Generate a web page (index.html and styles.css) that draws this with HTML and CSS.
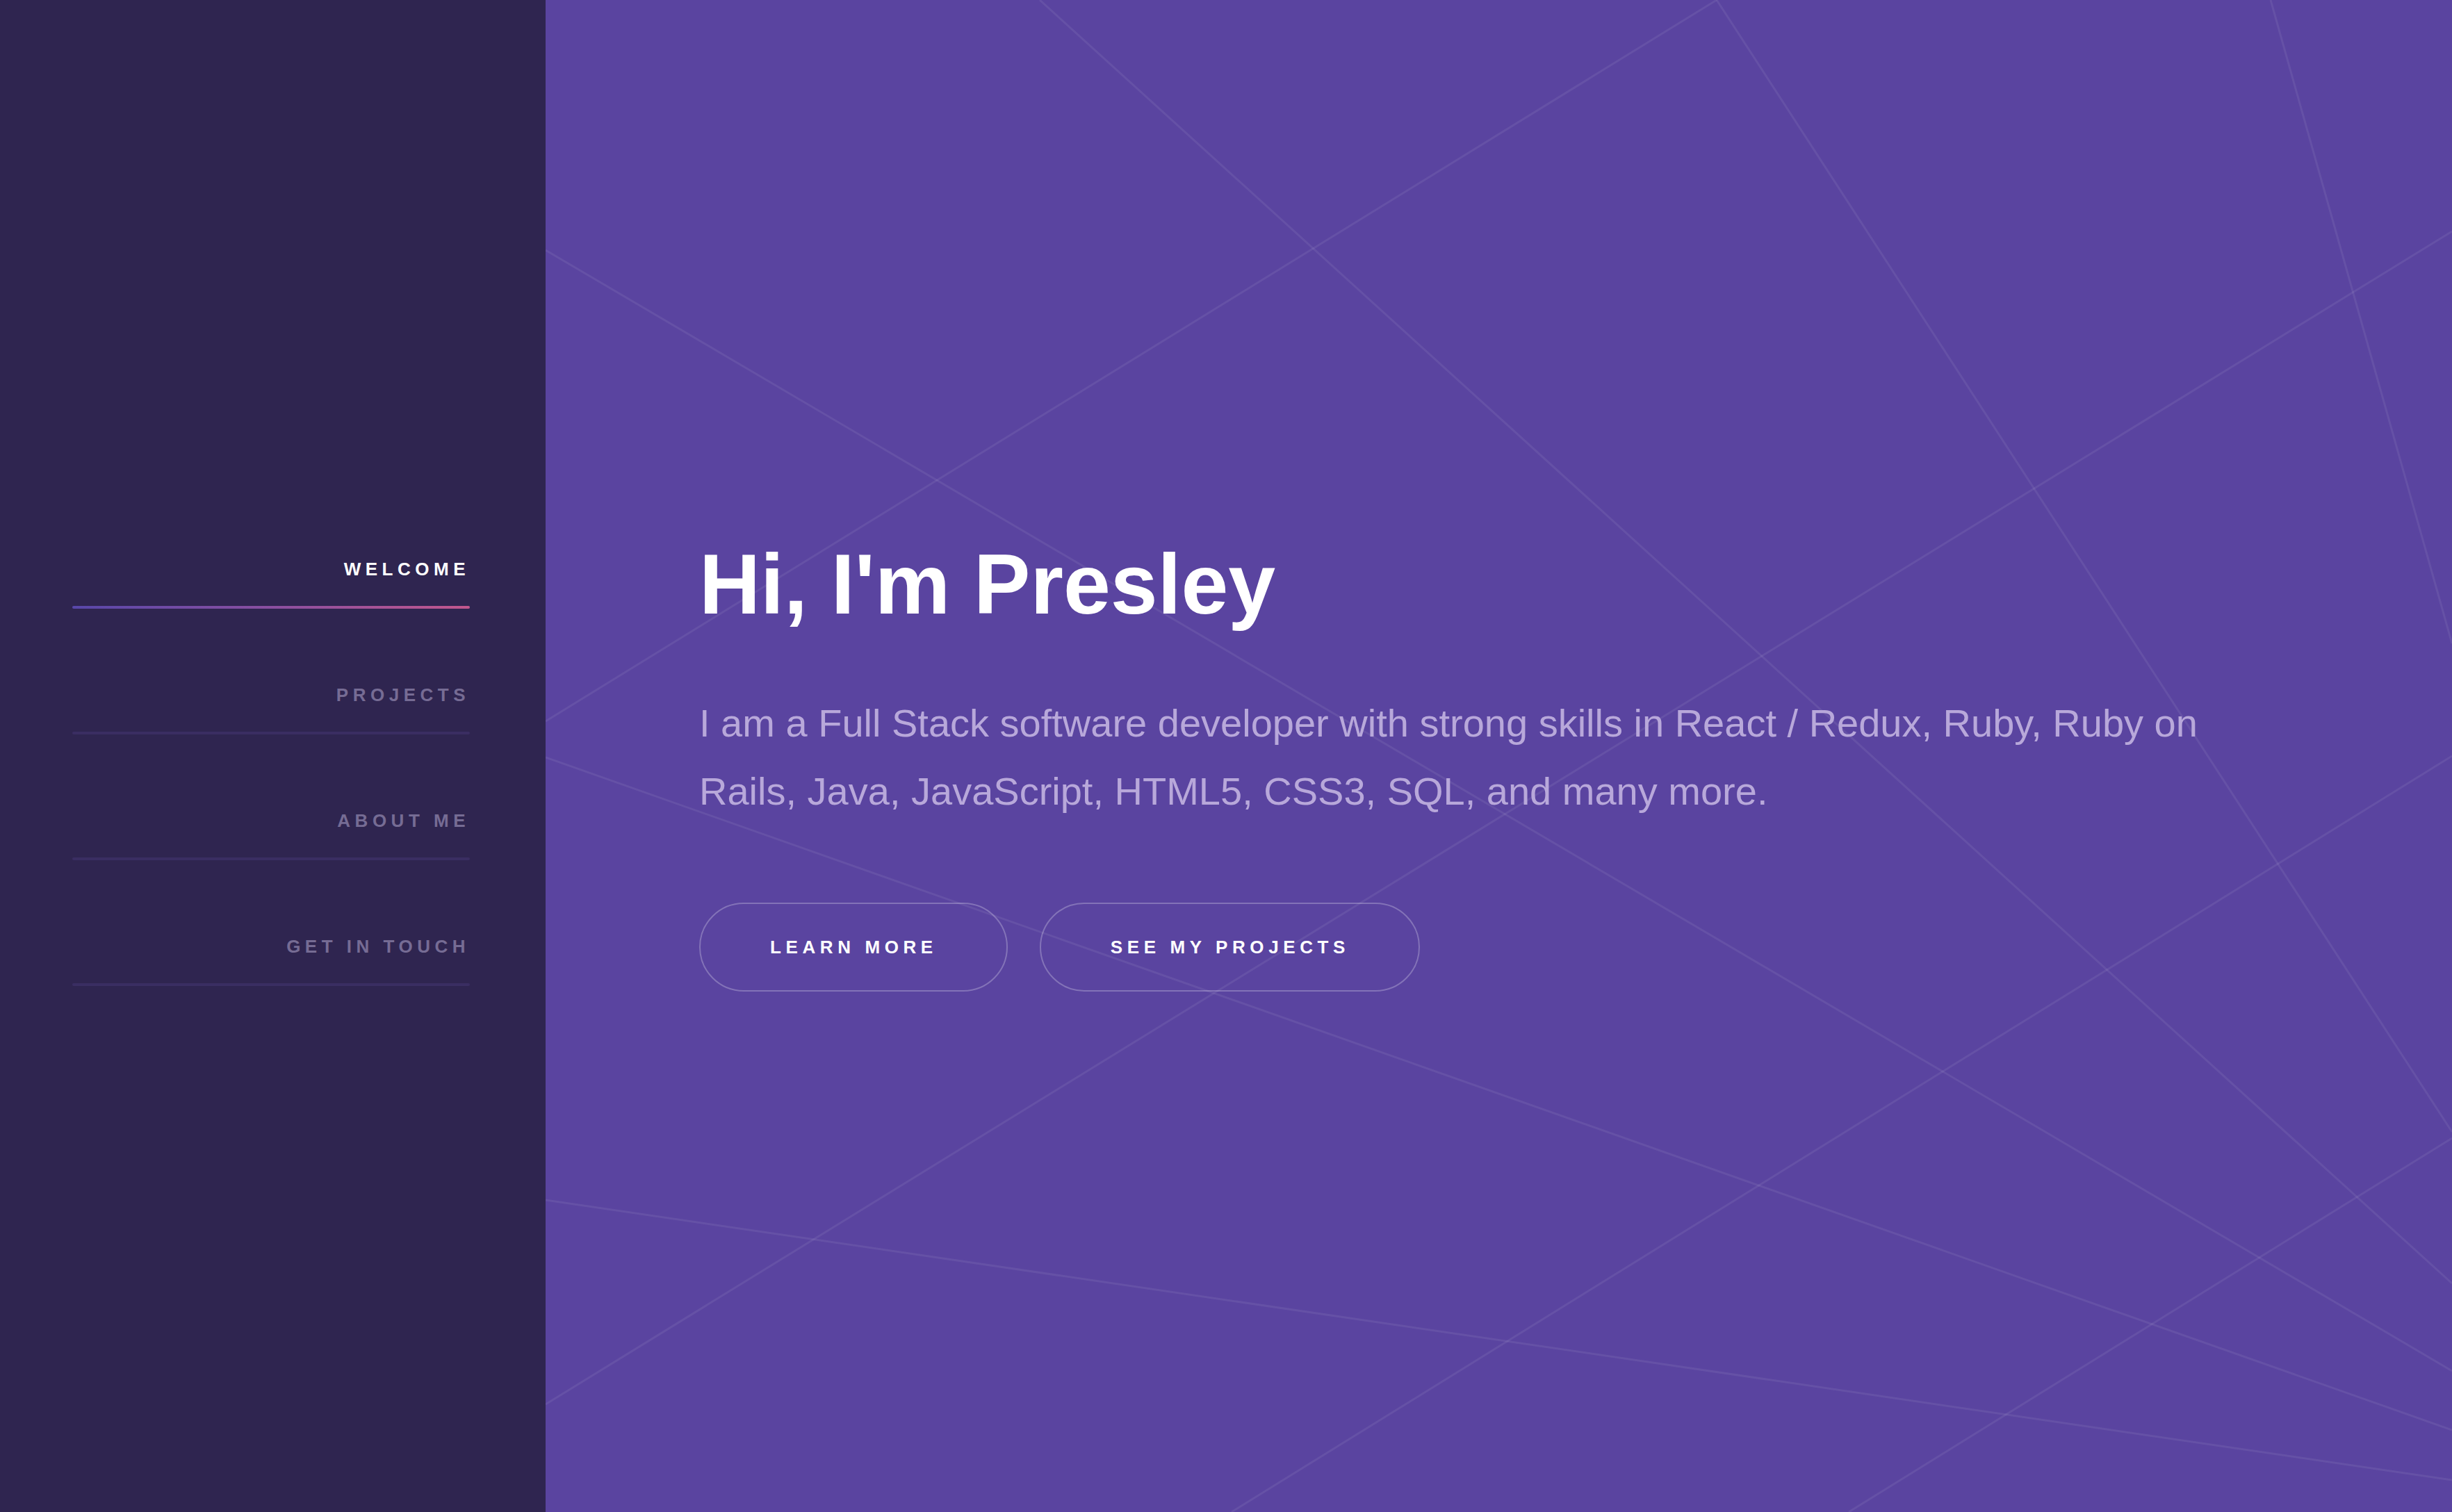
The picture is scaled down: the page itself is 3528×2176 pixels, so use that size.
FILE: index.html
```html
<!DOCTYPE html>
<html lang="en">
<head>
<meta charset="utf-8">
<title>Presley</title>
<link rel="stylesheet" href="styles.css">
</head>
<body>
<div class="page">
  <aside class="sidebar">
    <nav class="nav">
      <a class="nav-item is-active" href="#welcome">Welcome</a>
      <a class="nav-item" href="#projects">Projects</a>
      <a class="nav-item" href="#about">About me</a>
      <a class="nav-item" href="#contact">Get in touch</a>
    </nav>
  </aside>
  <main class="hero">
    <svg class="hero-lines" viewBox="0 0 2743 2176" preserveAspectRatio="none" aria-hidden="true">
      <g stroke="rgba(255,255,255,0.07)" stroke-width="3" fill="none">
        <line x1="711" y1="0" x2="2743" y2="1847"/>
        <line x1="1685" y1="0" x2="0" y2="1038"/>
        <line x1="1685" y1="0" x2="2743" y2="1629"/>
        <line x1="2482" y1="0" x2="2743" y2="926"/>
        <line x1="2743" y1="333" x2="0" y2="2021"/>
        <line x1="0" y1="360" x2="2743" y2="1973"/>
        <line x1="0" y1="1090" x2="2743" y2="2058"/>
        <line x1="0" y1="1727" x2="2743" y2="2130"/>
        <line x1="2743" y1="1088" x2="987" y2="2176"/>
        <line x1="2743" y1="1638" x2="1875" y2="2176"/>
      </g>
    </svg>
    <div class="hero-content">
      <h1 class="hero-title">Hi, I'm Presley</h1>
      <p class="hero-text">I am a Full Stack software developer with strong skills in React / Redux, Ruby, Ruby on Rails, Java, JavaScript, HTML5, CSS3, SQL, and many more.</p>
      <div class="hero-actions">
        <a class="btn" href="#about">Learn more</a>
        <a class="btn" href="#projects">See my projects</a>
      </div>
    </div>
  </main>
</div>
</body>
</html>
```

FILE: styles.css
```css
* {
  box-sizing: border-box;
}

html, body {
  margin: 0;
  padding: 0;
  height: 100%;
}

body {
  font-family: "Liberation Sans", Arial, sans-serif;
  background: #2f2550;
}

.page {
  display: flex;
  height: 100vh;
  overflow: hidden;
}

.sidebar {
  flex: 0 0 785px;
  background: #2f2550;
  padding: 803px 109px 0 104px;
}

.nav {
  display: flex;
  flex-direction: column;
  gap: 108px;
}

.nav-item {
  display: block;
  text-align: right;
  text-decoration: none;
  text-transform: uppercase;
  font-weight: 700;
  font-size: 26px;
  line-height: 32px;
  letter-spacing: 6.5px;
  color: #766c94;
}

.nav-item::after {
  content: "";
  display: block;
  height: 4px;
  margin-top: 37px;
  border-radius: 2px;
  background: #3a2e62;
}

.nav-item.is-active {
  color: #ffffff;
}

.nav-item.is-active::after {
  background: linear-gradient(90deg, #5847a9 0%, #8a4fa0 50%, #c2578d 100%);
}

.hero {
  flex: 1 1 auto;
  position: relative;
  background: #5a44a0;
  padding: 768px 0 0 221px;
}

.hero-lines {
  position: absolute;
  top: 0;
  left: 0;
  width: 100%;
  height: 100%;
  z-index: 0;
}

.hero-content {
  position: relative;
  z-index: 1;
}

.hero-title {
  margin: 0;
  font-size: 122px;
  line-height: 1.2;
  font-weight: 700;
  color: #ffffff;
}

.hero-text {
  margin: 78px 0 0;
  max-width: 2240px;
  font-size: 56px;
  line-height: 98px;
  color: #b8a8da;
}

.hero-actions {
  display: flex;
  gap: 46px;
  margin-top: 111px;
}

.btn {
  display: inline-block;
  padding: 47px 99px 47px 100px;
  border: 2px solid rgba(255, 255, 255, 0.25);
  border-radius: 64px;
  text-decoration: none;
  text-transform: uppercase;
  font-weight: 700;
  font-size: 26px;
  line-height: 30px;
  letter-spacing: 6.6px;
  color: #ffffff;
}
```
